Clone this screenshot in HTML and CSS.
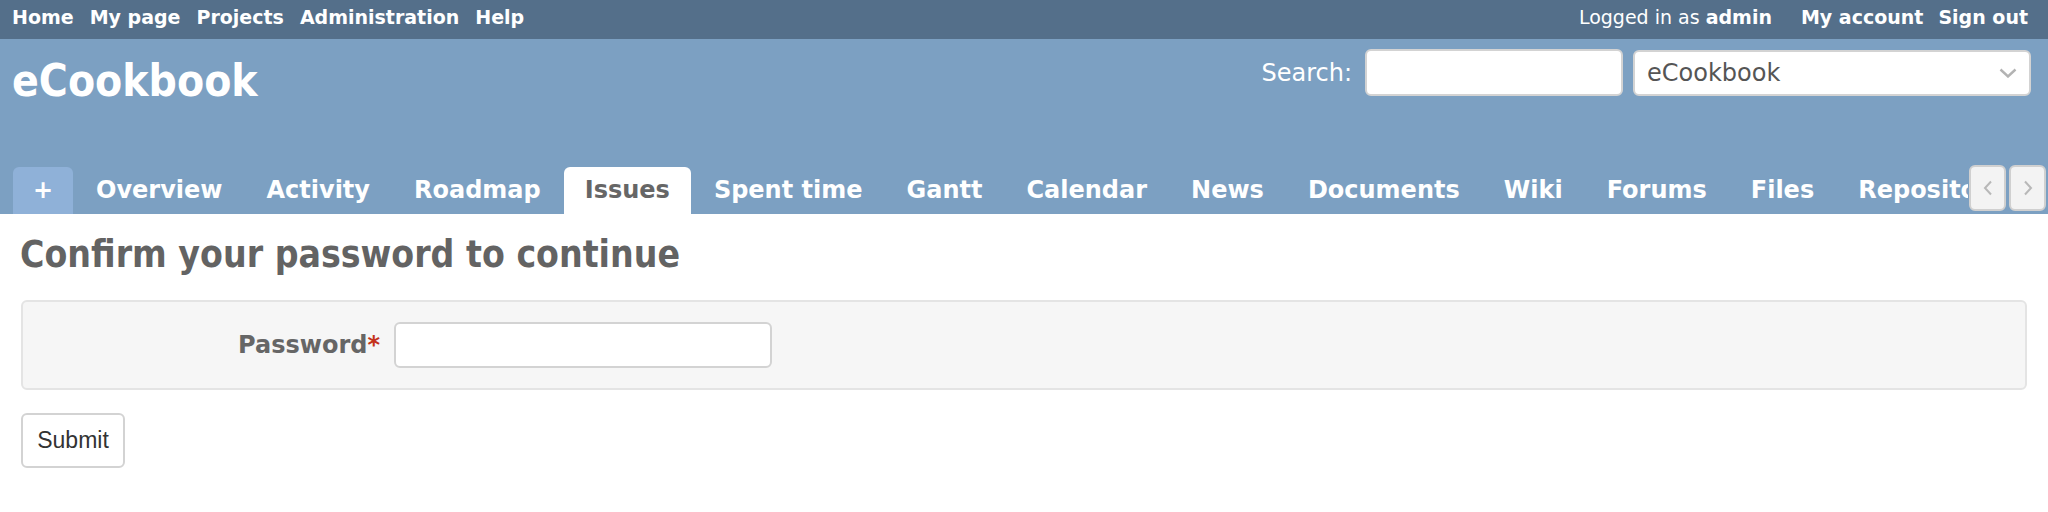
FILE: index.html
```html
<!DOCTYPE html>
<html lang="en">
<head>
    <meta charset="UTF-8">
    <meta name="viewport" content="width=device-width, initial-scale=1.0">
    <title>Confirm your password - eCookbook</title>
    <link rel="stylesheet" href="styles.css">
</head>
<body>

    <div id="top-menu">
        <ul class="top-links">
            <li><a href="#">Home</a></li>
            <li><a href="#">My page</a></li>
            <li><a href="#">Projects</a></li>
            <li><a href="#">Administration</a></li>
            <li><a href="#">Help</a></li>
        </ul>
        <div class="account">
            <span class="loggedas">Logged in as <b>admin</b></span>
            <a href="#">My account</a>
            <a href="#">Sign out</a>
        </div>
    </div>

    <div id="header">
        <div class="header-top">
            <h1>eCookbook</h1>
            <form class="quick-search">
                <label for="q">Search:</label>
                <input type="text" id="q" class="search-input">
                <div class="project-jump">
                    <span>eCookbook</span>
                    <svg class="chevron" width="18" height="10" viewBox="0 0 18 10">
                        <polyline points="1.5,1.5 9,8.5 16.5,1.5" fill="none" stroke="#b3b3b3" stroke-width="2.4"/>
                    </svg>
                </div>
            </form>
        </div>

        <div class="menu-row">
            <ul class="main-menu">
                <li><a href="#" class="new-object">+</a></li>
                <li><a href="#">Overview</a></li>
                <li><a href="#">Activity</a></li>
                <li><a href="#">Roadmap</a></li>
                <li><a href="#" class="selected">Issues</a></li>
                <li><a href="#">Spent time</a></li>
                <li><a href="#">Gantt</a></li>
                <li><a href="#">Calendar</a></li>
                <li><a href="#">News</a></li>
                <li><a href="#">Documents</a></li>
                <li><a href="#">Wiki</a></li>
                <li><a href="#">Forums</a></li>
                <li><a href="#">Files</a></li>
                <li><a href="#">Repository</a></li>
            </ul>
            <div class="tabs-buttons">
                <button class="tab-left">
                    <svg width="10" height="16" viewBox="0 0 10 16"><polyline points="8,1.5 2,8 8,14.5" fill="none" stroke="#b8b8b8" stroke-width="2"/></svg>
                </button>
                <button class="tab-right">
                    <svg width="10" height="16" viewBox="0 0 10 16"><polyline points="2,1.5 8,8 2,14.5" fill="none" stroke="#b8b8b8" stroke-width="2"/></svg>
                </button>
            </div>
        </div>
    </div>

    <div id="content">
        <h2>Confirm your password to continue</h2>
        <form>
            <div class="box">
                <p class="field">
                    <label for="password">Password<span class="required">*</span></label>
                    <input type="password" id="password" class="password-input">
                </p>
            </div>
            <input type="submit" value="Submit" class="btn">
        </form>
    </div>

</body>
</html>
```

FILE: styles.css
```css
* {
    margin: 0;
    padding: 0;
    box-sizing: border-box;
}

body {
    background-color: white;
    color: #333;
    font-family: "DejaVu Sans", Verdana, sans-serif;
}

a {
    color: white;
    text-decoration: none;
}

ul {
    list-style: none;
}

/* Barra in alto */
#top-menu {
    display: flex;
    justify-content: space-between;
    height: 39px;
    padding: 0 20px 4px 12px;
    background-color: #546f8a;
    color: white;
    font-size: 19px;
    line-height: 35px;
}

.top-links {
    display: flex;
    gap: 16px;
}

.top-links a,
.account a {
    font-weight: bold;
}

.account {
    display: flex;
    gap: 15px;
}

.loggedas {
    margin-right: 14px;
}

/* Testata del progetto */
#header {
    display: flex;
    flex-direction: column;
    justify-content: space-between;
    height: 175px;
    padding: 0 17px 0 13px;
    background-color: #7ca0c2;
    color: white;
}

.header-top {
    display: flex;
    justify-content: space-between;
    align-items: flex-start;
}

h1 {
    margin-top: 20px;
    margin-left: -1px;
    font-family: "DejaVu Sans Condensed", "DejaVu Sans", sans-serif;
    font-size: 44px;
    line-height: 44px;
    font-weight: bold;
}

.quick-search {
    display: flex;
    align-items: center;
    margin-top: 10px;
    font-size: 24px;
}

.quick-search label {
    margin-right: 13px;
}

.search-input {
    width: 258px;
    height: 47px;
    border: 2px solid #d3d3d3;
    border-radius: 6px;
    background: white;
}

.project-jump {
    display: flex;
    align-items: center;
    justify-content: space-between;
    width: 398px;
    height: 46px;
    margin-left: 10px;
    padding: 0 12px 0 12px;
    border: 2px solid #d3d3d3;
    border-radius: 6px;
    background: white;
    color: #555;
    font-size: 24px;
}

/* Schede del menu principale */
.menu-row {
    display: flex;
    align-items: flex-end;
    height: 49px;
    margin-right: -15px;
}

.main-menu {
    display: flex;
    flex: 1;
    overflow: hidden;
    white-space: nowrap;
}

.main-menu li {
    margin-right: 2px;
}

.main-menu a {
    display: block;
    height: 47px;
    padding: 0 21px;
    border-radius: 6px 6px 0 0;
    font-size: 24px;
    font-weight: bold;
    line-height: 47px;
}

.main-menu a.new-object {
    width: 60px;
    padding: 0;
    background-color: #8fb1d8;
    text-align: center;
}

.main-menu a.selected {
    background-color: white;
    color: #666;
}

.tabs-buttons {
    display: flex;
    gap: 3px;
    align-self: flex-start;
    margin-left: 1px;
}

.tabs-buttons button {
    display: flex;
    align-items: center;
    justify-content: center;
    width: 37px;
    height: 46px;
    border: 2px solid #d0d0d0;
    border-radius: 6px;
    background: #f3f3f3;
}

/* Contenuto della pagina */
#content {
    padding: 0 21px;
}

h2 {
    margin: 19px 0 23px;
    margin-left: -1px;
    color: #636363;
    font-family: "DejaVu Sans Condensed", "DejaVu Sans", sans-serif;
    font-size: 37px;
    line-height: 44px;
    font-weight: bold;
}

.box {
    padding: 20px 0;
    border: 2px solid #e4e4e4;
    border-radius: 6px;
    background-color: #f6f6f6;
}

.field {
    display: flex;
    align-items: center;
}

.field label {
    width: 357px;
    margin-right: 14px;
    color: #666;
    font-size: 24px;
    font-weight: bold;
    text-align: right;
}

.required {
    color: #c4321c;
}

.password-input {
    width: 378px;
    height: 46px;
    border: 2px solid #d3d3d3;
    border-radius: 6px;
    background: white;
}

.btn {
    width: 104px;
    height: 55px;
    margin-top: 23px;
    border: 2px solid #d3d3d3;
    border-radius: 6px;
    background: white;
    color: #333;
    font-family: "Liberation Sans", Arial, sans-serif;
    font-size: 23px;
}
```
